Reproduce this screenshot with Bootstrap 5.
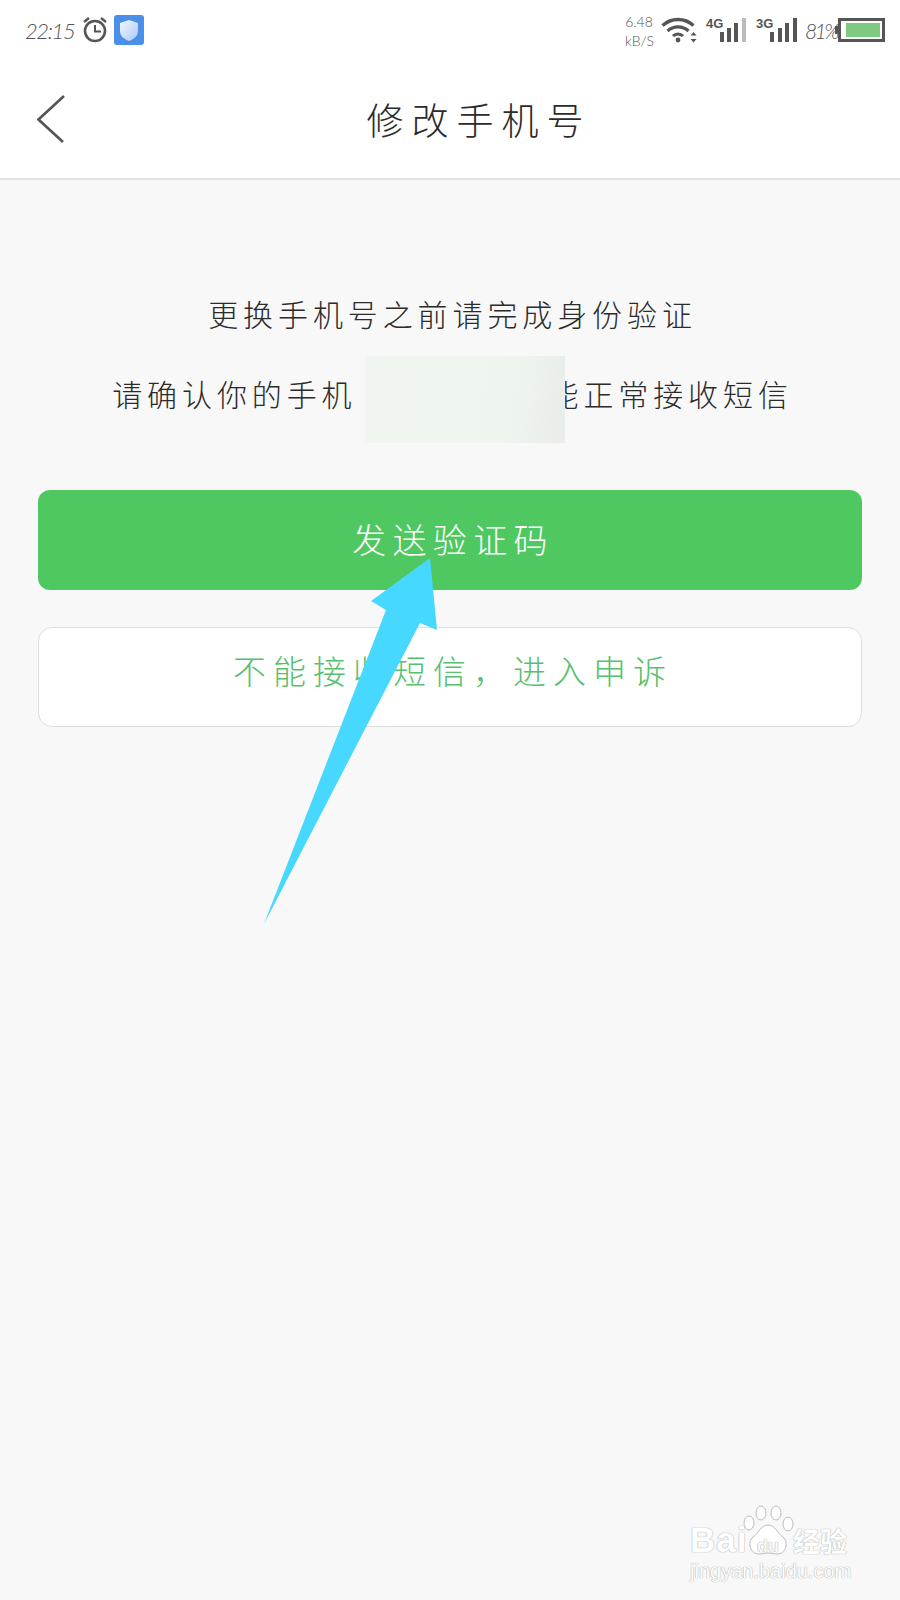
<!DOCTYPE html>
<html lang="zh-CN">
<head>
  <meta charset="UTF-8">
  <title>修改手机号</title>
  <meta name="viewport" content="width=device-width, initial-scale=1">
  <link href="https://cdn.jsdelivr.net/npm/bootstrap@5.3.0/dist/css/bootstrap.min.css" rel="stylesheet">
  <style>
    body { background: #f8f8f8; min-height: 1600px; font-family: "Noto Sans CJK SC", sans-serif; font-weight: 300; color: #2b2b2b; }
    .top-area { background: #fff; height: 180px; border-bottom: 2px solid #e2e2e2; }
    .status-row { height: 60px; padding: 0 15px 0 25px; color: #555; }
    .clock-text { font: italic 300 22px Lato, sans-serif; width: 49px; letter-spacing: -1.4px; }
    .shield-tile { margin-left: 6px; }
    .speed-text { font: 300 14px/19px Lato, sans-serif; width: 28px; margin-right: 8px; margin-top: 2px; }
    .level-text { font: italic 300 21px Lato, sans-serif; width: 30px; letter-spacing: -2.6px; }
    .title-row { height: 118px; padding-left: 37px; }
    .page-title { flex: 1; text-align: center; font-size: 37px; letter-spacing: 8px; padding-right: 9px; color: #2b2b2b; margin: 0; font-weight: 300; line-height: 1; }
    .info-line { height: 80px; font-size: 30px; letter-spacing: 4.9px; line-height: 80px; white-space: nowrap; }
    .first-line { margin-top: 93px; padding-left: 5px; }
    .second-line { padding-left: 5px; }
    .phone-gap { width: 192px; }
    .phone-patch { left: 365px; top: 356px; width: 200px; height: 87px; background: linear-gradient(100deg, #f1f5f1, #eef5ee 70%, #e9ecea); }
    .btn-area { padding: 57px 38px 0; }
    .send-btn, .send-btn:hover { background: #4fc862; color: #fff; height: 100px; font-size: 34px; letter-spacing: 6.3px; padding: 0 0 4px 6px; border: 0; border-radius: 12px; font-weight: 300; }
    .appeal-btn, .appeal-btn:hover { background: #fff; color: #58c06c; height: 100px; font-size: 33px; letter-spacing: 7px; padding: 0 0 12px 6px; border: 1px solid #dfdfdf; border-radius: 14px; margin-top: 37px; font-weight: 300; }
    .arrow-layer { left: 0; top: 0; pointer-events: none; }
    .mark-box { left: 690px; top: 1505px; width: 170px; color: #fff; font-family: "Liberation Sans", sans-serif; text-shadow: 0 0 1px #aaa, 0 0 1px #aaa; }
    .mark-bai { font-size: 35px; font-weight: 700; line-height: 1; left: 0; top: 17px; letter-spacing: 1px; }
    .mark-paw { left: 53px; top: 0; }
    .mark-du { font-size: 18px; font-weight: 700; line-height: 1; left: 67px; top: 32px; color: #f8f8f8; }
    .mark-jy { font-family: "Noto Sans CJK SC", sans-serif; font-size: 27px; font-weight: 700; line-height: 1; left: 103px; top: 22px; white-space: nowrap; }
    .mark-url { font-size: 20px; line-height: 1; left: 0; top: 56px; white-space: nowrap; }
  </style>
</head>
<body class="position-relative">

  <!-- status bar + title -->
  <div class="top-area">
    <div class="status-row d-flex align-items-center">
      <span class="clock-text">22:15</span>
      <svg class="ms-2" width="26" height="28" viewBox="0 0 26 28" fill="none" stroke="#555" stroke-width="2.6">
        <circle cx="13" cy="15" r="10"/>
        <path d="M13 9v6.500h6" stroke-width="2"/>
        <path d="M2 6l5-4M24 6l-5-4" stroke-width="2.400"/>
      </svg>
      <svg class="shield-tile" width="30" height="30" viewBox="0 0 30 30">
        <defs><linearGradient id="shieldFill" x1="0" y1="0" x2="1" y2="1"><stop offset="0" stop-color="#f4f8ff"/><stop offset="1" stop-color="#a9c8f5"/></linearGradient></defs>
        <rect width="30" height="30" rx="3" fill="#4a90e8"/>
        <path d="M15 5l9 3v8c0 5-4 8-9 10-5-2-9-5-9-10V8z" fill="url(#shieldFill)"/>
      </svg>

      <div class="ms-auto d-flex align-items-center">
        <div class="speed-text text-center">6.48<br>kB/S</div>
        <svg width="36" height="26" viewBox="0 0 36 26" fill="none" stroke="#555">
          <path d="M1.500 8.500a23 23 0 0 1 31 0" stroke-width="3.400"/>
          <path d="M6.500 14a15.500 15.500 0 0 1 21 0" stroke-width="3.200"/>
          <path d="M12 19a7 7 0 0 1 10 0" stroke-width="3"/>
          <circle cx="17" cy="23" r="2.400" fill="#555" stroke="none"/>
          <path d="M32.500 15l3 3.500h-6zM32.500 25.500l-3-3.500h6z" fill="#555" stroke="none"/>
        </svg>
        <svg class="ms-2" width="42" height="26" viewBox="0 0 42 26">
          <text x="1" y="11" font-family="Liberation Sans, sans-serif" font-weight="700" font-size="13" fill="#555">4G</text>
          <rect x="15" y="15" width="4" height="10" fill="#555"/>
          <rect x="22" y="11" width="4" height="14" fill="#555"/>
          <rect x="29" y="6" width="4" height="19" fill="#555"/>
          <rect x="37" y="1" width="4" height="24" fill="#bbb"/>
        </svg>
        <svg class="ms-2" width="42" height="26" viewBox="0 0 42 26">
          <text x="1" y="11" font-family="Liberation Sans, sans-serif" font-weight="700" font-size="13" fill="#555">3G</text>
          <rect x="15" y="15" width="4" height="10" fill="#555"/>
          <rect x="23" y="11" width="4" height="14" fill="#555"/>
          <rect x="30" y="6" width="4" height="19" fill="#555"/>
          <rect x="38" y="1" width="4" height="24" fill="#555"/>
        </svg>
        <span class="level-text ms-2">81%</span>
        <svg width="50" height="24" viewBox="0 0 50 24">
          <rect x="0" y="8" width="3" height="8" fill="#555"/>
          <rect x="4.500" y="1.500" width="44" height="21" fill="none" stroke="#555" stroke-width="3"/>
          <rect x="11" y="5" width="34" height="14" fill="#7dc97f"/>
        </svg>
      </div>
    </div>
    <div class="title-row d-flex align-items-center">
      <svg width="30" height="50" viewBox="0 0 30 50" fill="none" stroke="#555" stroke-width="2.600">
        <path d="M27 2L1.500 25.500 26 48"/>
      </svg>
      <h1 class="page-title">修改手机号</h1>
    </div>
  </div>

  <!-- verify text -->
  <div class="info-line first-line text-center">更换手机号之前请完成身份验证</div>
  <div class="info-line second-line d-flex justify-content-center">
    <span>请确认你的手机</span><span class="phone-gap"></span><span>能正常接收短信</span>
  </div>
  <div class="phone-patch position-absolute"></div>

  <div class="btn-area">
    <button type="button" class="btn send-btn w-100 d-block">发送验证码</button>
    <button type="button" class="btn appeal-btn w-100 d-block">不能接收短信，进入申诉</button>
  </div>

  <!-- annotation arrow drawn over the buttons -->
  <svg class="arrow-layer position-absolute" width="900" height="1600" viewBox="0 0 900 1600">
    <polygon points="430,558 371,601 386,610 264,924 420,623 437,630" fill="#47d8ff"/>
  </svg>

  <!-- watermark -->
  <div class="mark-box position-absolute">
    <span class="mark-bai position-absolute">Bai</span>
    <svg class="mark-paw position-absolute" width="52" height="52" viewBox="0 0 52 52" fill="#fff" stroke="#bbb" stroke-width="1">
      <ellipse cx="6" cy="18" rx="5" ry="7"/>
      <ellipse cx="18" cy="8" rx="5" ry="7"/>
      <ellipse cx="33" cy="8" rx="5" ry="7"/>
      <ellipse cx="45" cy="19" rx="5" ry="7"/>
      <path d="M25 20c7 0 9 8 15 12 6 5 3 17-6 17-4 0-6-1-9-1s-5 1-9 1c-9 0-12-12-6-17 6-4 8-12 15-12z"/>
    </svg>
    <span class="mark-du position-absolute">du</span>
    <span class="mark-jy position-absolute">经验</span>
    <span class="mark-url position-absolute">jingyan.baidu.com</span>
  </div>

  <script src="https://cdn.jsdelivr.net/npm/bootstrap@5.3.0/dist/js/bootstrap.bundle.min.js"></script>
</body>
</html>
